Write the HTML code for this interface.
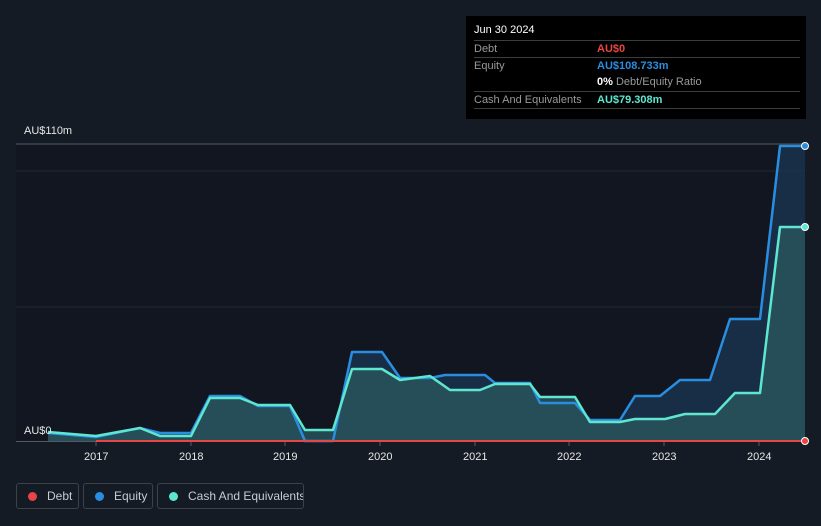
<!DOCTYPE html><html><head><style>
body{margin:0;width:821px;height:526px;background:#151b25;font-family:"Liberation Sans",sans-serif;overflow:hidden;position:relative}
.tt{position:absolute;left:466px;top:16px;width:340px;height:103px;background:#000;color:#ddd;font-size:11px}
.r{position:absolute;left:8px;width:326px;border-top:1px solid #3a3d42;height:16px;line-height:17px}
.r span{position:absolute;left:123px}
.l{position:absolute;top:483px;height:26px;border:1px solid #3c414a;border-radius:3px;color:#c7cbd2;font-size:12px;line-height:24px;box-sizing:border-box;white-space:nowrap;overflow:hidden}
.l i{display:inline-block;width:9px;height:9px;border-radius:50%;margin:0 10px 0 11px;vertical-align:-1px}
.ax{position:absolute;top:451px;color:#e6e6e6;font-size:11px}
</style></head><body>
<svg width="821" height="526" style="position:absolute;left:0;top:0">
<rect x="16" y="144" width="789" height="297" fill="#111620"/>
<line x1="16" y1="144" x2="805" y2="144" stroke="#555a62"/>
<line x1="16" y1="171" x2="805" y2="171" stroke="#242a33"/>
<line x1="16" y1="307" x2="805" y2="307" stroke="#242a33"/>
<line x1="16" y1="441.5" x2="805" y2="441.5" stroke="#555a62"/>
<g stroke="#555a62"><line x1="96" y1="441" x2="96" y2="446"/><line x1="191" y1="441" x2="191" y2="446"/><line x1="285" y1="441" x2="285" y2="446"/><line x1="380" y1="441" x2="380" y2="446"/><line x1="475" y1="441" x2="475" y2="446"/><line x1="569" y1="441" x2="569" y2="446"/><line x1="664" y1="441" x2="664" y2="446"/><line x1="759" y1="441" x2="759" y2="446"/></g>
<polygon fill="#1a3550" opacity="0.8" points="48,433 96,437 140,428 160,433 191,433 210,396 240,396 258,406 290,406 305,441 333,441 352,352 382,352 400,378 430,378 445,375 485,375 495,383 530,383 540,403 575,403 590,420 620,420 635,396 660,396 680,380 710,380 730,319 760,319 780,146 805,146 805,441 48,441"/>
<polygon fill="#2a5a60" opacity="0.75" points="48,432 96,436 140,428 160,436 191,436 210,398 240,398 258,405 290,405 305,430 333,430 352,369 382,369 400,380 430,376 450,390 480,390 495,384 530,384 540,397 575,397 590,422 620,422 635,419 665,419 685,414 715,414 735,393 760,393 780,227 805,227 805,441 48,441"/>
<polyline fill="none" stroke="#2a8ee0" stroke-width="2.5" stroke-linejoin="round" points="48,433 96,437 140,428 160,433 191,433 210,396 240,396 258,406 290,406 305,441 333,441 352,352 382,352 400,378 430,378 445,375 485,375 495,383 530,383 540,403 575,403 590,420 620,420 635,396 660,396 680,380 710,380 730,319 760,319 780,146 805,146"/>
<polyline fill="none" stroke="#5ee6d0" stroke-width="2.5" stroke-linejoin="round" points="48,432 96,436 140,428 160,436 191,436 210,398 240,398 258,405 290,405 305,430 333,430 352,369 382,369 400,380 430,376 450,390 480,390 495,384 530,384 540,397 575,397 590,422 620,422 635,419 665,419 685,414 715,414 735,393 760,393 780,227 805,227"/>
<line x1="96" y1="441" x2="805" y2="441" stroke="#e84545" stroke-width="2"/>
<circle cx="805" cy="146" r="3.5" fill="#2a8ee0" stroke="#fff" stroke-width="1"/>
<circle cx="805" cy="227" r="3.5" fill="#5ee6d0" stroke="#fff" stroke-width="1"/>
<circle cx="805" cy="441" r="3.5" fill="#e84545" stroke="#fff" stroke-width="1"/>
</svg>
<div style="position:absolute;left:24px;top:125px;color:#e6e6e6;font-size:11px">AU$110m</div>
<div style="position:absolute;left:24px;top:425px;color:#e6e6e6;font-size:11px">AU$0</div>
<div class="ax" style="left:84px">2017</div><div class="ax" style="left:179px">2018</div><div class="ax" style="left:273px">2019</div><div class="ax" style="left:368px">2020</div><div class="ax" style="left:463px">2021</div><div class="ax" style="left:557px">2022</div><div class="ax" style="left:652px">2023</div><div class="ax" style="left:747px">2024</div>
<div class="tt">
<div style="position:absolute;left:8px;top:8px;color:#fff">Jun 30 2024</div>
<div class="r" style="top:24px;color:#999">Debt<span style="color:#e84545;font-weight:bold">AU$0</span></div>
<div class="r" style="top:41px;color:#999">Equity<span style="color:#2a8ee0;font-weight:bold">AU$108.733m</span></div>
<div class="r" style="top:58px;border:0;color:#999"><span><b style="color:#fff">0%</b> Debt/Equity Ratio</span></div>
<div class="r" style="top:75px;color:#999">Cash And Equivalents<span style="color:#5ee6d0;font-weight:bold">AU$79.308m</span></div>
<div class="r" style="top:92px"></div>
</div>
<div class="l" style="left:16px;width:63px"><i style="background:#e84545"></i>Debt</div>
<div class="l" style="left:83px;width:70px"><i style="background:#2a8ee0"></i>Equity</div>
<div class="l" style="left:157px;width:147px"><i style="background:#5ee6d0"></i>Cash And Equivalents</div>
</body></html>
